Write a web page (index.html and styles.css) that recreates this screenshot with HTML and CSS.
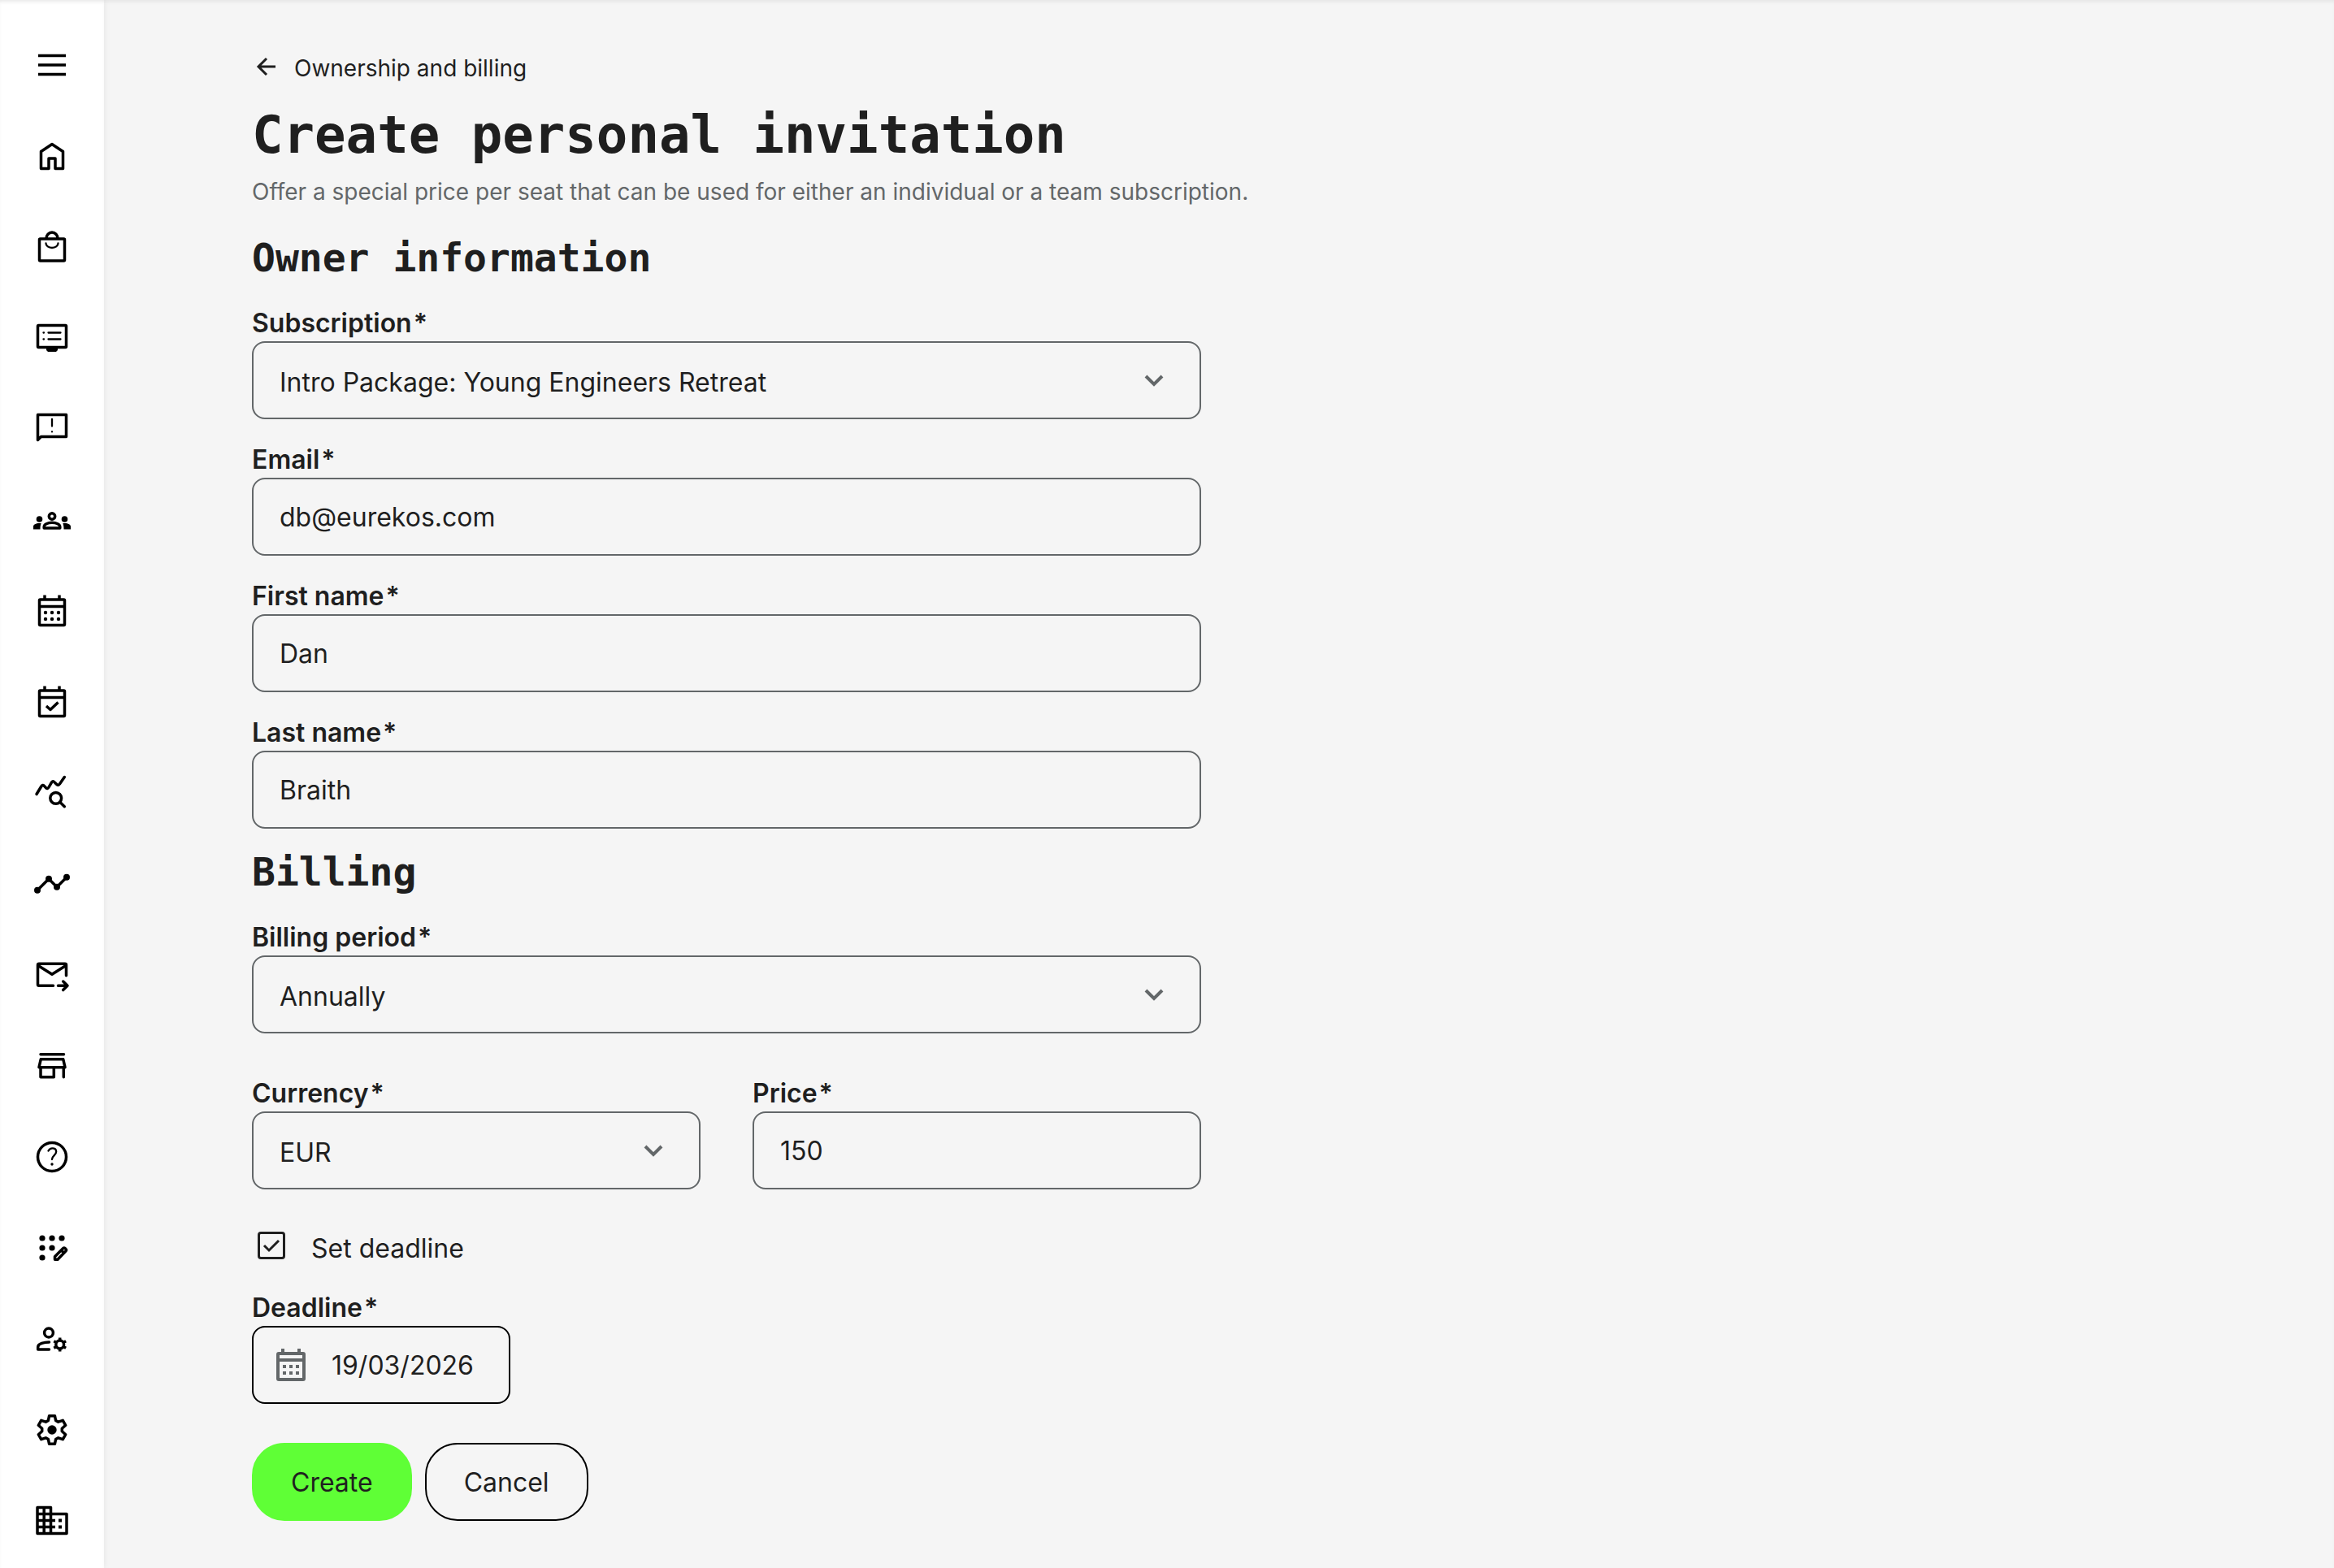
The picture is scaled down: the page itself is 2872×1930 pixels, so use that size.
FILE: index.html
```html
<!DOCTYPE html>
<html lang="en">
<head>
    <meta charset="UTF-8">
    <meta name="viewport" content="width=device-width, initial-scale=1.0">
    <title>Create personal invitation</title>
    <link rel="stylesheet" href="styles.css">
</head>
<body>

<div class="layout">
    <nav class="sidebar" aria-label="Main menu">
        <button type="button" class="nav-item" aria-label="Toggle menu">
            <svg viewBox="0 0 48 48"><path d="M7 12.5h34M7 24h34M7 35.5h34"/></svg>
        </button>
        <a href="#" class="nav-item" aria-label="Home">
            <svg viewBox="0 0 48 48"><path d="M10.5 39.5V18.5L24 9.500l13.500 9V39.500H28V27H20V39.500Z"/></svg>
        </a>
        <a href="#" class="nav-item" aria-label="Shop">
            <svg viewBox="0 0 48 48"><rect x="8.500" y="14" width="31" height="27" rx="1"/><path d="M17 13.500a7 7.500 0 0 1 14 0"/><path class="thin" d="M16.500 19.500a7.500 5.500 0 0 0 15 0"/></svg>
        </a>
        <a href="#" class="nav-item" aria-label="Courses">
            <svg viewBox="0 0 48 48"><rect x="6.500" y="8.500" width="35" height="27" rx="1"/><path class="thin" d="M13.500 17.500h.5M19.500 17.500h15M13.500 25.500h.5M19.500 25.500h15"/><path class="solid" d="M17 36h14v3l-2 2H19l-2-2z"/></svg>
        </a>
        <a href="#" class="nav-item" aria-label="Feedback">
            <svg viewBox="0 0 48 48"><path d="M6.500 37.500v-31h35v27h-31z"/><path class="thin" d="M24 12v8.500M24 27.300v.1"/></svg>
        </a>
        <a href="#" class="nav-item" aria-label="Groups">
            <svg viewBox="0 0 48 48"><circle cx="24" cy="19.500" r="3.700"/><path d="M14.200 34v-1.500c0-3 4.500-5.200 9.800-5.200s9.800 2.200 9.800 5.200V34z"/><circle class="solid" cx="8.500" cy="23" r="3.800"/><circle class="solid" cx="39.500" cy="23" r="3.800"/><path class="solid" d="M1 35.500V32c0-2.500 4-4.500 9.700-3.800-.9 2-1.200 4-1.200 7.300zM47 35.500V32c0-2.500-4-4.500-9.700-3.800.9 2 1.200 4 1.200 7.300z"/></svg>
        </a>
        <a href="#" class="nav-item" aria-label="Calendar">
            <svg viewBox="0 0 48 48"><rect x="8.500" y="10" width="31" height="31.500" rx="1"/><path d="M15 4.500V10M33 4.500V10M8.500 18.500h31"/><g class="solid"><circle cx="16" cy="26" r="2.200"/><circle cx="24" cy="26" r="2.200"/><circle cx="32" cy="26" r="2.200"/><circle cx="16" cy="34" r="2.200"/><circle cx="24" cy="34" r="2.200"/><circle cx="32" cy="34" r="2.200"/></g></svg>
        </a>
        <a href="#" class="nav-item" aria-label="Bookings">
            <svg viewBox="0 0 48 48"><rect x="8.500" y="10" width="31" height="31.500" rx="1"/><path d="M15 4.500V10M33 4.500V10M8.500 18.500h31M17 29l5 4.500 9.500-9"/></svg>
        </a>
        <a href="#" class="nav-item" aria-label="Insights">
            <svg viewBox="0 0 48 48"><path class="round" d="M5 25.500l5.800-9.500q1.600-2.600 3.600-.6l2.200 2.300q1.900 1.900 3.400-.7l3.300-5.700q1.700-2.700 3.900-.4l2.600 2.600q2 1.900 3.600-.6L39.300 4.500"/><circle cx="28.700" cy="30.300" r="6.900"/><path class="round" d="M33.700 35.300l5.600 5.400"/></svg>
        </a>
        <a href="#" class="nav-item" aria-label="Activity">
            <svg viewBox="0 0 48 48"><path d="M6 31.700l14-14 10 10 12-12"/><g class="solid"><circle cx="6" cy="31.700" r="4"/><circle cx="20" cy="17.700" r="4"/><circle cx="30" cy="27.700" r="4"/><circle cx="42" cy="15.700" r="4"/></g></svg>
        </a>
        <a href="#" class="nav-item" aria-label="Messages">
            <svg viewBox="0 0 48 48"><path class="round" d="M25.500 37.300H8q-1.500 0-1.500-1.500v-24q0-1.500 1.500-1.500h32q1.500 0 1.500 1.500v13M7 12.500l17 10.800 17-10.800M31.500 37.300h11M37.700 32l5.300 5.300-5.300 5.300"/></svg>
        </a>
        <a href="#" class="nav-item" aria-label="Store">
            <svg viewBox="0 0 48 48"><path class="round" d="M10 9.700h28.500M10.300 15.700h27.400l2.300 10H8zM10 26v11.700h16.300V26M38.300 26v11.700"/></svg>
        </a>
        <a href="#" class="nav-item" aria-label="Help">
            <svg viewBox="0 0 48 48"><circle cx="24" cy="24" r="17.500"/><path class="thin" d="M19.500 16.500c1.200-2.300 2.800-3.200 4.900-3.200 2.900 0 4.800 1.700 4.800 4.200 0 4.500-5 4.800-5.200 9.500"/><circle class="solid" cx="24" cy="33" r="1.700"/></svg>
        </a>
        <a href="#" class="nav-item" aria-label="Page builder">
            <svg viewBox="0 0 48 48"><g class="solid"><circle cx="12" cy="12" r="3.600"/><circle cx="24" cy="12" r="3.600"/><circle cx="36" cy="12" r="3.600"/><circle cx="12" cy="24" r="3.600"/><circle cx="24" cy="24" r="3.600"/><circle cx="12" cy="36" r="3.600"/></g><path d="M27.500 38.200v-3.500L37.700 24.600q1.200-1.100 2.300 0l1 1q1.100 1.100 0 2.300L31 38.200z"/><path d="M36 27.500l2.500 2.500"/></svg>
        </a>
        <a href="#" class="nav-item" aria-label="User management">
            <svg viewBox="0 0 48 48"><circle cx="20" cy="16.500" r="5.400"/><path class="round" d="M20.500 27.900c-6 0-13.800 2-13.800 6v3.200h13.800"/><circle cx="33.700" cy="31" r="4.900"/><path d="M33.700 22.500v4M33.700 35.500v4M26.300 26.700l3.500 2M37.600 33.300l3.500 2M26.300 35.300l3.500-2M37.600 28.700l3.500-2"/></svg>
        </a>
        <a href="#" class="nav-item" aria-label="Settings">
            <svg viewBox="0 0 48 48"><path d="M19.400 12.400 20.600 6.700H27.400L28.600 12.400 31.700 14.200 37.300 12.400 40.700 18.300 36.300 22.200V25.800L40.700 29.700 37.300 35.600 31.700 33.800 28.600 35.600 27.400 41.300H20.600L19.400 35.600 16.300 33.800 10.700 35.600 7.300 29.700 11.700 25.800V22.200L7.300 18.300 10.700 12.400 16.300 14.200Z"/><circle class="solid" cx="24" cy="24" r="5.700"/></svg>
        </a>
        <a href="#" class="nav-item" aria-label="Organization">
            <svg viewBox="0 0 48 48"><path d="M6 7.500h16.500v32H6zM22.500 15.500h19.500v24H22.500M14.200 7.500v32M6 15.500h16.500M6 23.500h22M6 31.500h22"/><path class="solid" d="M32 21.500h4v4h-4zM32 29.500h4v4h-4z"/></svg>
        </a>
    </nav>

    <main class="content">
        <a href="#" class="back-link">
            <svg viewBox="0 0 36 36"><path d="M29 16H9M18 6L8 16l10 10"/></svg>
            Ownership and billing
        </a>
        <h1>Create personal invitation</h1>
        <p class="intro">Offer a special price per seat that can be used for either an individual or a team subscription.</p>

        <form class="form">
            <h2>Owner information</h2>
            <div class="fields">
                <div class="field">
                    <label for="subscription">Subscription<span class="required">*</span></label>
                    <div class="select-box">
                        <select id="subscription">
                            <option>Intro Package: Young Engineers Retreat</option>
                        </select>
                        <svg class="chevron" viewBox="0 0 24 24"><path d="M2 7l10 10L22 7"/></svg>
                    </div>
                </div>
                <div class="field">
                    <label for="email">Email<span class="required">*</span></label>
                    <input type="email" id="email" value="db@eurekos.com">
                </div>
                <div class="field">
                    <label for="first-name">First name<span class="required">*</span></label>
                    <input type="text" id="first-name" value="Dan">
                </div>
                <div class="field">
                    <label for="last-name">Last name<span class="required">*</span></label>
                    <input type="text" id="last-name" value="Braith">
                </div>
            </div>

            <h2>Billing</h2>
            <div class="field">
                <label for="period">Billing period<span class="required">*</span></label>
                <div class="select-box">
                    <select id="period">
                        <option>Annually</option>
                        <option>Monthly</option>
                    </select>
                    <svg class="chevron" viewBox="0 0 24 24"><path d="M2 7l10 10L22 7"/></svg>
                </div>
            </div>
            <div class="field-row">
                <div class="field">
                    <label for="currency">Currency<span class="required">*</span></label>
                    <div class="select-box">
                        <select id="currency">
                            <option>EUR</option>
                            <option>USD</option>
                        </select>
                        <svg class="chevron" viewBox="0 0 24 24"><path d="M2 7l10 10L22 7"/></svg>
                    </div>
                </div>
                <div class="field">
                    <label for="price">Price<span class="required">*</span></label>
                    <input type="text" id="price" inputmode="decimal" value="150">
                </div>
            </div>

            <div class="check-row">
                <span class="check-box">
                    <input type="checkbox" id="set-deadline" checked>
                    <svg viewBox="0 0 34 34"><path d="M8 17l6 6L26 11"/></svg>
                </span>
                <label for="set-deadline">Set deadline</label>
            </div>

            <div class="field">
                <label for="deadline">Deadline<span class="required">*</span></label>
                <div class="date-box">
                    <svg viewBox="0 0 36 40"><rect x="2" y="6" width="32" height="32" rx="1"/><path d="M8 0v6M28 0v6M2 14h32"/><path d="M8 22h4M16 22h4M24 22h4M8 30h4M16 30h4M24 30h4"/></svg>
                    <input type="text" id="deadline" value="19/03/2026">
                </div>
            </div>

            <div class="actions">
                <button type="submit" class="btn btn-primary">Create</button>
                <button type="button" class="btn">Cancel</button>
            </div>
        </form>
    </main>
</div>

</body>
</html>
```
FILE: styles.css
```css
* {
    box-sizing: border-box;
}
body {
    margin: 0;
    background-color: #f5f5f5;
    color: #1f1f1f;
    font-family: Inter, sans-serif;
    font-size: 32px;
}
.layout {
    display: flex;
    min-height: 100vh;
    box-shadow: inset 0 4px 4px -2px #e4e4e4;
}

/* Sidebar */
.sidebar {
    display: flex;
    flex-direction: column;
    align-items: center;
    gap: 64px;
    width: 128px;
    flex-shrink: 0;
    padding: 56px 0 32px;
    background-color: #fff;
    box-shadow: 0 0 8px rgba(0, 0, 0, 0.08), inset 0 4px 4px -2px #e8e8e8;
}
.nav-item {
    display: block;
    width: 48px;
    height: 48px;
    padding: 0;
    border: 0;
    background: none;
    color: #000;
    cursor: pointer;
}
.nav-item svg {
    display: block;
    fill: none;
    stroke: currentColor;
    stroke-width: 3.5;
    stroke-linejoin: round;
}
.nav-item .thin {
    stroke-width: 2.3;
    stroke-linecap: round;
}
.nav-item .round {
    stroke-linecap: round;
}
.nav-item .solid {
    fill: currentColor;
    stroke: none;
}

/* Page header */
.content {
    flex: 1;
    min-width: 0;
    padding: 66px 182px 58px;
}
.back-link {
    display: flex;
    align-items: center;
    gap: 16px;
    width: fit-content;
    color: inherit;
    font-size: 28px;
    line-height: 36px;
    text-decoration: none;
}
.back-link svg {
    width: 36px;
    height: 36px;
    fill: none;
    stroke: currentColor;
    stroke-width: 3;
}
h1, h2 {
    font-family: "DejaVu Sans Mono", monospace;
    font-weight: bold;
}
h1 {
    margin: 24px 0 12px;
    font-size: 64px;
    line-height: 80px;
}
h2 {
    margin: 23px 0 35px;
    font-size: 48px;
    line-height: 60px;
}
.intro {
    margin: 0 0 33px;
    color: #636769;
    font-size: 28px;
    line-height: 36px;
}

/* Form */
.form {
    max-width: 1168px;
}
.fields {
    display: grid;
    gap: 34px;
}
.field label {
    display: block;
    margin-bottom: 6px;
    font-weight: 600;
    line-height: 32px;
}
.required {
    margin-left: 2px;
}
.field input,
.field select {
    display: block;
    width: 100%;
    height: 96px;
    padding: 0 32px;
    border: 2px solid #636769;
    border-radius: 16px;
    background: transparent;
    color: inherit;
    font: inherit;
    appearance: none;
}
.field select {
    padding-top: 4px;
}
.select-box {
    display: grid;
    align-items: center;
}
.select-box select,
.chevron {
    grid-area: 1 / 1;
}
.chevron {
    justify-self: end;
    width: 24px;
    height: 24px;
    margin-right: 46px;
    fill: none;
    stroke: #636769;
    stroke-width: 4;
    pointer-events: none;
}
.field-row {
    display: grid;
    grid-template-columns: 1fr 1fr;
    gap: 64px;
    margin-top: 58px;
}
.check-row {
    display: flex;
    gap: 26px;
    margin: 52px 0 36px;
    line-height: 42px;
}
.check-box {
    display: grid;
    width: 34px;
    height: 34px;
    margin-left: 7px;
}
.check-row label {
    padding-left: 6px;
}
.check-box input,
.check-box svg {
    grid-area: 1 / 1;
    width: 34px;
    height: 34px;
}
.check-box input {
    margin: 0;
    border: 3px solid #1f1f1f;
    border-radius: 4px;
    appearance: none;
}
.check-box svg {
    fill: none;
    stroke: #1f1f1f;
    stroke-width: 3;
    pointer-events: none;
}
.check-box input:not(:checked) + svg {
    visibility: hidden;
}
.date-box {
    display: flex;
    align-items: center;
    gap: 32px;
    width: 318px;
    height: 96px;
    padding: 0 28px;
    border: 2px solid #000;
    border-radius: 16px;
}
.date-box svg {
    flex-shrink: 0;
    width: 36px;
    height: 40px;
    fill: none;
    stroke: #636769;
    stroke-width: 4;
}
.date-box input {
    height: 92px;
    padding: 0;
    border: 0;
}
.actions {
    display: flex;
    gap: 16px;
    margin-top: 48px;
}
.btn {
    height: 96px;
    padding: 0 46px;
    border: 2px solid #000;
    border-radius: 40px;
    background: transparent;
    color: inherit;
    font: inherit;
    cursor: pointer;
}
.btn-primary {
    border-color: #5fff36;
    background-color: #5fff36;
}
```
